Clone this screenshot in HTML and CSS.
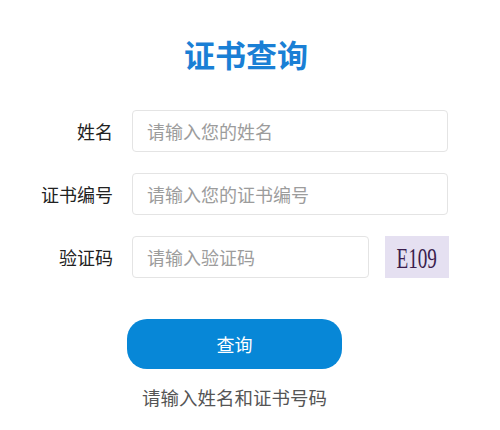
FILE: index.html
```html
<!DOCTYPE html>
<html lang="zh-CN">
<head>
<meta charset="utf-8">
<title>证书查询</title>
<link rel="stylesheet" href="styles.css">
</head>
<body>
<div class="page">
  <h1 class="title">证书查询</h1>
  <form class="form">
    <div class="row">
      <label class="label">姓名</label>
      <input class="field" type="text" placeholder="请输入您的姓名">
    </div>
    <div class="row">
      <label class="label">证书编号</label>
      <input class="field" type="text" placeholder="请输入您的证书编号">
    </div>
    <div class="row">
      <label class="label">验证码</label>
      <div class="code-wrap">
        <input class="field" type="text" placeholder="请输入验证码">
        <div class="captcha"><span class="captcha-text">E109</span></div>
      </div>
    </div>
    <div class="actions">
      <button class="btn" type="button">查询</button>
      <p class="hint">请输入姓名和证书号码</p>
    </div>
  </form>
</div>
</body>
</html>
```

FILE: styles.css
```css
* { box-sizing: border-box; }
html, body { margin: 0; padding: 0; background: #fff; }
body {
  font-family: "Noto Sans CJK SC", "Noto Sans", sans-serif;
  width: 500px;
  height: 430px;
  overflow: hidden;
}
.page { padding-top: 34px; }
.title {
  margin: 0;
  padding-right: 8px;
  text-align: center;
  font-size: 31px;
  line-height: 40px;
  font-weight: 700;
  color: #1a7fd5;
}
.form {
  margin: 36px 0 0 20px;
  width: 429px;
  display: flex;
  flex-direction: column;
  gap: 21px;
}
.row {
  display: grid;
  grid-template-columns: 93px 316px;
  column-gap: 19px;
  align-items: center;
}
.label {
  text-align: right;
  font-size: 18px;
  color: #222;
  line-height: 24px;
}
.field {
  width: 100%;
  height: 42px;
  border: 1px solid #e4e4e4;
  border-radius: 4px;
  padding: 0 14px;
  font-family: inherit;
  font-size: 18px;
  color: #333;
  outline: none;
  background: #fff;
}
.field::placeholder { color: #9c9c9c; }
.code-wrap {
  display: flex;
  gap: 16px;
  width: 317px;
}
.code-wrap .field { width: 237px; flex: none; }
.captcha {
  width: 64px;
  height: 42px;
  background: #e5e0f1;
  display: flex;
  align-items: center;
  justify-content: center;
  overflow: hidden;
}
.captcha-text {
  font-family: "Liberation Serif", "Times New Roman", serif;
  font-size: 30px;
  line-height: 30px;
  color: #3a1d4d;
  display: inline-block;
  transform: scaleX(0.64);
  margin-top: 2px;
}
.actions {
  margin-top: 20px;
  display: flex;
  flex-direction: column;
  align-items: center;
}
.btn {
  width: 215px;
  height: 50px;
  border: none;
  border-radius: 20px;
  background: #0787d7;
  color: #fff;
  font-family: inherit;
  font-size: 18px;
  cursor: pointer;
}
.hint {
  margin: 16px 0 0;
  font-size: 18.5px;
  line-height: 24px;
  color: #555;
}
```
